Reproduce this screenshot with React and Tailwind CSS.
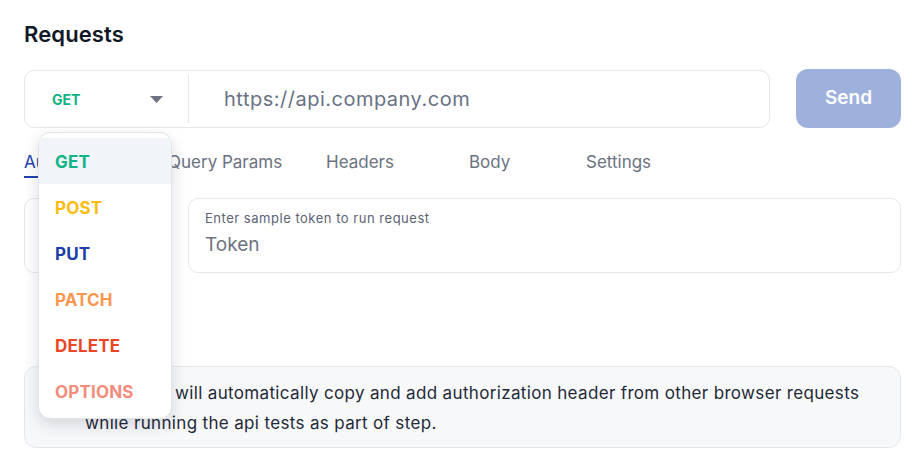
import React from 'react'

const METHODS = [
  { name: 'GET', color: 'text-[#10b386]', active: true },
  { name: 'POST', color: 'text-[#fbbc0f]' },
  { name: 'PUT', color: 'text-[#1b3fa6]' },
  { name: 'PATCH', color: 'text-[#ff9650]' },
  { name: 'DELETE', color: 'text-[#ea4527]' },
  { name: 'OPTIONS', color: 'text-[#f48b7b]' },
]

const TABS = [
  { label: 'Auth', w: 'w-[144px]', active: true },
  { label: 'Query Params', w: 'w-[158px]' },
  { label: 'Headers', w: 'w-[143px]' },
  { label: 'Body', w: 'w-[117px]' },
  { label: 'Settings', w: '' },
]

export default function App() {
  return (
    <div className="min-h-screen bg-white font-['Inter','Liberation_Sans',sans-serif] text-[#111827]">
      <main className="w-[901px] pl-6 pt-5">
        <h1 className="text-[22px] font-semibold leading-7 tracking-[0.005em]">Requests</h1>

        <div className="relative mt-[22px] flex items-start gap-[26px]">
          <div className="flex h-[58px] flex-1 items-center rounded-[10px] border border-[#e5e7eb] bg-white">
            <div className="flex h-full w-[163px] items-center justify-between pl-[27px] pr-[25px]">
              <span className="text-[14px] font-bold text-[#10b386]">GET</span>
              <svg width="13" height="7" viewBox="0 0 13 7" className="mt-[1px]">
                <path d="M0 0H13L6.5 7Z" fill="#6b7280" />
              </svg>
            </div>
            <div className="h-[48px] w-px bg-[#e5e7eb]" />
            <span className="pl-[35px] text-[20px] tracking-[0.025em] text-[#697186]">https://api.company.com</span>
          </div>
          <button className="-mt-px h-[59px] w-[105px] rounded-[12px] bg-[#9eb1dd] text-[19px] font-semibold text-white">
            Send
          </button>

          <div className="absolute left-[14px] top-[62px] z-10 w-[134px] rounded-[12px] border border-[#e2e4e8] bg-white pb-1 pt-[5px] shadow-[0_6px_16px_rgba(15,23,42,0.14)]">
            {METHODS.map((m) => (
              <div
                key={m.name}
                className={`flex h-[46px] items-center pl-4 pt-[3px] text-[17px] font-bold tracking-[0.01em] ${m.color} ${m.active ? 'bg-[#f1f4f8]' : ''}`}
              >
                {m.name}
              </div>
            ))}
          </div>
        </div>

        <div className="mt-[22px] flex">
          {TABS.map((t) => (
            <div key={t.label} className={t.w}>
              <div
                className={`inline-block pb-[2px] text-[17px] leading-6 ${
                  t.active ? 'border-b-2 border-[#1e40af] text-[#1e40af]' : 'border-b-2 border-transparent text-[#6b7280]'
                }`}
              >
                {t.label}
              </div>
            </div>
          ))}
        </div>

        <div className="mt-[20px] flex gap-4">
          <div className="flex h-[75px] w-[148px] items-center rounded-[10px] border border-[#e5e7eb] px-4 text-[16px] text-[#374151]">
            Bearer
          </div>
          <div className="h-[75px] flex-1 rounded-[10px] border border-[#e5e7eb] px-4 pt-[11px]">
            <div className="text-[13px] leading-4 tracking-[0.04em] text-[#5b6273]">Enter sample token to run request</div>
            <div className="mt-[7px] text-[19px] leading-6 text-[#6b7280]">Token</div>
          </div>
        </div>

        <div className="mt-[93px] flex rounded-[12px] border border-[#e5e7eb] bg-[#f7f8fa] pb-[9px] pl-5 pt-[11px]">
          <svg width="20" height="20" viewBox="0 0 24 24" className="mr-5 mt-[5px] shrink-0" fill="none" stroke="#1e40af" strokeWidth="2">
            <circle cx="12" cy="12" r="10" />
            <path d="M12 16v-4M12 8h.01" strokeLinecap="round" />
          </svg>
          <p className="text-[17px] leading-[30px] tracking-[0.02em] text-[#1f2937]">
            <span className="block">Testsigma will automatically copy and add authorization header from other browser requests</span>
            <span className="block">while running the api tests as part of step.</span>
          </p>
        </div>
      </main>
    </div>
  )
}
